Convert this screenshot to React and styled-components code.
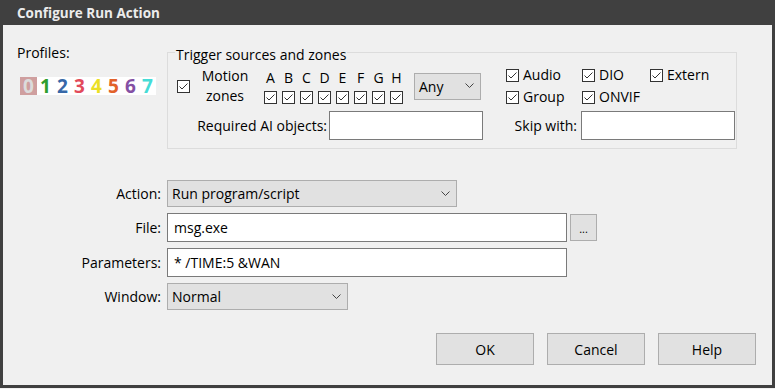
import React from "react";
import styled, { createGlobalStyle } from "styled-components";

const GlobalStyle = createGlobalStyle`
    html, body {
        margin: 0;
        padding: 0;
        background: #f0f0f0;
    }
    body {
        font-family: "Open Sans", "Noto Sans", sans-serif;
        font-size: 14px;
        color: #000;
    }
`;

const Frame = styled.div`
    width: 775px;
    height: 388px;
    box-sizing: border-box;
    background: #404040;
    padding: 0 3px 3px 3px;
    display: flex;
    flex-direction: column;
`;

const TitleBar = styled.div`
    height: 25px;
    flex: none;
    display: flex;
    align-items: center;
    padding-left: 14px;
    color: #ececec;
    font-weight: 700;
    font-size: 13.5px;
`;

const Body = styled.div`
    flex: 1;
    background: #f0f0f0;
    padding: 19px 16px 0 14px;
    display: flex;
    flex-direction: column;
`;

const Top = styled.div`
    display: flex;
`;

const ProfilesCol = styled.div`
    width: 150px;
    flex: none;
    padding-top: 1px;
`;

const Label = styled.div`
    line-height: 16px;
    white-space: nowrap;
    text-align: ${pr => pr.align || "left"};
    width: ${pr => (pr.w ? pr.w + "px" : "auto")};
    flex: none;
`;

const Digits = styled.div`
    display: flex;
    margin: 16px 0 0 3px;
    background: #fff;
    width: 136px;
`;

const Digit = styled.span`
    width: 17px;
    height: 18px;
    display: flex;
    align-items: center;
    justify-content: center;
    font-family: "Noto Sans", sans-serif;
    font-weight: 700;
    font-size: 19px;
    line-height: 18px;
    color: ${pr => pr.color};
    background: ${pr => pr.bg || "transparent"};
`;

const Group = styled.fieldset`
    margin: 0;
    padding: 5px 0 8px 9px;
    width: 570px;
    box-sizing: border-box;
    border: 1px solid #dcdcdc;
    display: flex;
    flex-direction: column;
    gap: 5px;
`;

const Legend = styled.legend`
    padding: 0 1px;
    margin-left: -2px;
    line-height: 17px;
    position: relative;
    top: 2px;
`;

const Row = styled.div`
    display: flex;
    align-items: center;
`;

const MotionLabel = styled.div`
    width: 60px;
    margin-left: 5px;
    text-align: center;
    line-height: 20px;
`;

const Zones = styled.div`
    display: flex;
    gap: 5px;
    margin-left: 9px;
`;

const Zone = styled.div`
    width: 13px;
    display: flex;
    flex-direction: column;
    align-items: center;
    gap: 5px;
    margin-top: 1px;
    line-height: 16px;
`;

const Combo = styled.div`
    width: ${pr => pr.w}px;
    height: 27px;
    box-sizing: border-box;
    border: 1px solid #adadad;
    background: #e1e1e1;
    display: flex;
    align-items: center;
    justify-content: space-between;
    padding: 0 6px 0 4px;
    margin-left: ${pr => pr.ml || 0}px;
    flex: none;
`;

const Sources = styled.div`
    display: grid;
    grid-template-columns: 76px 68px auto;
    row-gap: 6px;
    margin-left: 25px;
    align-self: flex-start;
    margin-top: 1px;
`;

const CheckItem = styled.label`
    display: flex;
    align-items: center;
    gap: 4px;
    line-height: 16px;
`;

const TextBox = styled.div`
    width: ${pr => pr.w}px;
    height: ${pr => pr.h || 29}px;
    box-sizing: border-box;
    border: 1px solid #7a7a7a;
    background: #fff;
    display: flex;
    align-items: center;
    padding-left: 6px;
    margin-left: ${pr => pr.ml || 0}px;
    flex: none;
`;

const Form = styled.div`
    display: grid;
    grid-template-columns: 144px auto;
    column-gap: 6px;
    row-gap: 6px;
    margin-top: 31px;
    align-items: center;
    justify-items: start;
`;

const FieldLine = styled.div`
    display: flex;
    align-items: center;
    gap: 3px;
`;

const SmallButton = styled.div`
    width: 27px;
    height: 27px;
    box-sizing: border-box;
    border: 1px solid #adadad;
    background: #e1e1e1;
    display: flex;
    align-items: center;
    justify-content: center;
    font-size: 11px;
    line-height: 1;
    padding-top: 2px;
`;

const Buttons = styled.div`
    display: flex;
    justify-content: flex-end;
    gap: 13px;
    margin-top: 23px;
`;

const Button = styled.div`
    width: 98px;
    height: 32px;
    box-sizing: border-box;
    border: 1px solid #adadad;
    background: #e1e1e1;
    display: flex;
    align-items: center;
    justify-content: center;
`;

const Check = () => (
    <svg width="13" height="13" viewBox="0 0 13 13" style={{ flex: "none", display: "block" }}>
        <rect x="0.5" y="0.5" width="12" height="12" fill="#fff" stroke="#333" />
        <path d="M2.5 6.5 L5 9 L10.5 3.5" fill="none" stroke="#333" strokeWidth="1" />
    </svg>
);

const Chevron = () => (
    <svg width="9" height="6" viewBox="0 0 9 6" style={{ display: "block" }}>
        <path d="M0.5 0.5 L4.5 4.5 L8.5 0.5" fill="none" stroke="#444" strokeWidth="1" />
    </svg>
);

const profiles = [
    { n: "0", color: "#dcdcdc", bg: "#cf9f9f" },
    { n: "1", color: "#2e9e2e" },
    { n: "2", color: "#3768a8" },
    { n: "3", color: "#e24a5a" },
    { n: "4", color: "#ebdf25" },
    { n: "5", color: "#e2622a" },
    { n: "6", color: "#8450a4" },
    { n: "7", color: "#45dcd6" },
];

const zones = ["A", "B", "C", "D", "E", "F", "G", "H"];

const App = () => {
    return (
        <Frame>
            <GlobalStyle />
            <TitleBar>Configure Run Action</TitleBar>
            <Body>
                <Top>
                    <ProfilesCol>
                        <Label>Profiles:</Label>
                        <Digits>
                            {profiles.map(p => (
                                <Digit key={p.n} color={p.color} bg={p.bg}>{p.n}</Digit>
                            ))}
                        </Digits>
                    </ProfilesCol>
                    <Group>
                        <Legend>Trigger sources and zones</Legend>
                        <Row>
                            <Check />
                            <MotionLabel>Motion<br />zones</MotionLabel>
                            <Zones>
                                {zones.map(z => (
                                    <Zone key={z}>
                                        <span>{z}</span>
                                        <Check />
                                    </Zone>
                                ))}
                            </Zones>
                            <Combo w={67} ml={11}>
                                <span>Any</span>
                                <Chevron />
                            </Combo>
                            <Sources>
                                <CheckItem><Check />Audio</CheckItem>
                                <CheckItem><Check />DIO</CheckItem>
                                <CheckItem><Check />Extern</CheckItem>
                                <CheckItem><Check />Group</CheckItem>
                                <CheckItem><Check />ONVIF</CheckItem>
                            </Sources>
                        </Row>
                        <Row>
                            <Label w={150} align="right">Required AI objects:</Label>
                            <TextBox w={154} ml={2} />
                            <Label w={94} align="right">Skip with:</Label>
                            <TextBox w={154} ml={4} />
                        </Row>
                    </Group>
                </Top>
                <Form>
                    <Label w={144} align="right">Action:</Label>
                    <Combo w={290}>
                        <span>Run program/script</span>
                        <Chevron />
                    </Combo>
                    <Label w={144} align="right">File:</Label>
                    <FieldLine>
                        <TextBox w={400}>msg.exe</TextBox>
                        <SmallButton>...</SmallButton>
                    </FieldLine>
                    <Label w={144} align="right">Parameters:</Label>
                    <TextBox w={400}>* /TIME:5 &amp;WAN</TextBox>
                    <Label w={144} align="right">Window:</Label>
                    <Combo w={181}>
                        <span>Normal</span>
                        <Chevron />
                    </Combo>
                </Form>
                <Buttons>
                    <Button>OK</Button>
                    <Button>Cancel</Button>
                    <Button>Help</Button>
                </Buttons>
            </Body>
        </Frame>
    );
};

export default App;
